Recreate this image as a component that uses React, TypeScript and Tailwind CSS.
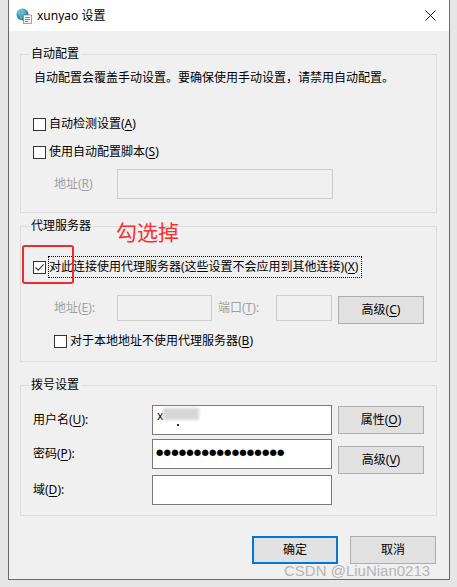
import React from "react";

const FONT = { fontFamily: '"Noto Sans", "Noto Sans CJK SC", sans-serif' };

function Key({ k }: { k: string }) {
  return <span className="underline underline-offset-2 decoration-1">{k}</span>;
}

function Box({ checked }: { checked?: boolean }) {
  return (
    <span className="w-[13px] h-[13px] border border-[#333333] bg-white flex items-center justify-center shrink-0">
      {checked && (
        <svg width="11" height="11" viewBox="0 0 11 11">
          <path d="M1.5 5.5 L4.2 8.2 L9.6 2.4" stroke="#3c3c3c" strokeWidth="1.1" fill="none" />
        </svg>
      )}
    </span>
  );
}

function Btn({ children, primary }: { children: React.ReactNode; primary?: boolean }) {
  return (
    <button
      className={
        "w-[86px] h-[28px] bg-[#e1e1e1] text-[12px] leading-[16px] text-black flex items-center justify-center " +
        (primary ? "border-2 border-[#0078d7]" : "border border-[#adadad]")
      }
    >
      {children}
    </button>
  );
}

function Group({ title, children, className }: { title: string; children: React.ReactNode; className?: string }) {
  return (
    <fieldset className={"w-[417px] border border-[#dcdcdc] " + (className ?? "")}>
      <legend className="ml-[8px] px-[2px] text-[12px] leading-[16px] text-black">{title}</legend>
      {children}
    </fieldset>
  );
}

function TitleIcon() {
  return (
    <svg width="16" height="16" viewBox="0 0 16 16">
      <defs>
        <radialGradient id="g" cx="0.35" cy="0.3" r="0.8">
          <stop offset="0" stopColor="#9fe0ff" />
          <stop offset="0.5" stopColor="#2f8fd8" />
          <stop offset="1" stopColor="#1a5fa8" />
        </radialGradient>
      </defs>
      <circle cx="6.5" cy="6.5" r="6" fill="url(#g)" />
      <path d="M3 3.5 C5 3 6 5 4.5 7 C3.5 8.5 5 10 6 11" stroke="#5cc15a" strokeWidth="2" fill="none" />
      <path d="M8 2 C9.5 3 10 4.5 9 6" stroke="#5cc15a" strokeWidth="1.6" fill="none" />
      <rect x="7.5" y="7" width="8" height="8.5" fill="#ffffff" stroke="#8a8a8a" strokeWidth="0.8" />
      <path d="M9 9.5 H14 M9 11.5 H14 M9 13.5 H12.5" stroke="#4a7fc0" strokeWidth="0.9" />
    </svg>
  );
}

export default function App() {
  return (
    <div className="relative w-[457px] h-[587px] bg-[#e6e6e6] overflow-hidden" style={FONT}>
      <div className="ml-[8px] w-[442px] h-[580px] border-x border-b border-[#6b6b6b] flex flex-col">
        {/* title bar */}
        <div className="h-[31px] bg-white flex items-center pl-[7px] pr-[10px] shrink-0">
          <TitleIcon />
          <span className="ml-[5px] text-[12px] leading-[16px] text-black">xunyao 设置</span>
          <svg className="ml-auto mr-[3px]" width="11" height="11" viewBox="0 0 11 11">
            <path d="M0.5 0.5 L10.5 10.5 M10.5 0.5 L0.5 10.5" stroke="#111" strokeWidth="1" />
          </svg>
        </div>

        {/* body */}
        <div className="flex-1 bg-[#f0f0f0] pl-[11px] pt-[15px] text-[12px] leading-[16px] text-black">
          <Group title="自动配置" className="pb-[13px]">
            <div className="pl-[13px]">
              <div className="mt-[8px]">自动配置会覆盖手动设置。要确保使用手动设置，请禁用自动配置。</div>
              <div className="mt-[30px] -ml-[1px] flex items-center gap-[3px]">
                <Box />
                <span>
                  自动检测设置(<Key k="A" />)
                </span>
              </div>
              <div className="mt-[12px] -ml-[1px] flex items-center gap-[3px]">
                <Box />
                <span>
                  使用自动配置脚本(<Key k="S" />)
                </span>
              </div>
              <div className="mt-[9px] ml-[20px] flex items-center">
                <span className="w-[63px] text-[#a0a0a0]">
                  地址(<Key k="R" />)
                </span>
                <div className="w-[216px] h-[30px] border border-[#cccccc] bg-[#f0f0f0]" />
              </div>
            </div>
          </Group>

          <Group title="代理服务器" className="mt-[5px] pb-[12px]">
            <div className="pl-[13px]">
              <div className="mt-[22px] -ml-[1px] flex items-center gap-[2px]">
                <Box checked />
                <span className="h-[22px] w-[314px] border border-dotted border-black flex items-center">
                  对此连接使用代理服务器(这些设置不会应用到其他连接)(<Key k="X" />)
                </span>
              </div>
              <div className="mt-[17px] ml-[20px] flex items-start">
                <span className="w-[63px] h-[26px] flex items-center text-[#a0a0a0]">
                  地址(<Key k="E" />):
                </span>
                <div className="w-[95px] h-[26px] border border-[#cccccc] bg-[#f0f0f0]" />
                <span className="ml-[6px] w-[58px] h-[26px] flex items-center text-[#a0a0a0]">
                  端口(<Key k="T" />):
                </span>
                <div className="w-[56px] h-[26px] border border-[#cccccc] bg-[#f0f0f0]" />
                <div className="ml-[6px] mt-[1px]">
                  <Btn>
                    高级(<Key k="C" />)
                  </Btn>
                </div>
              </div>
              <div className="mt-[9px] ml-[20px] flex items-center gap-[3px]">
                <Box />
                <span>
                  对于本地地址不使用代理服务器(<Key k="B" />)
                </span>
              </div>
            </div>
          </Group>

          <Group title="拨号设置" className="mt-[15px] pb-[10px]">
            <div className="pl-[12px] mt-[12px] flex">
              <div className="flex flex-col gap-[4px]">
                <div className="flex items-center">
                  <span className="w-[119px]">
                    用户名(<Key k="U" />):
                  </span>
                  <div className="relative w-[180px] h-[30px] border border-[#7a7a7a] bg-white flex items-center pl-[4px]">
                    <span className="-mt-[8px]">x</span>
                    <div className="absolute left-[10px] top-[2px] w-[36px] h-[12px] bg-[#d6d6d6] blur-[1.5px]" />
                    <div className="absolute left-[24px] top-[18px] w-[2px] h-[2px] bg-[#333]" />
                  </div>
                </div>
                <div className="flex items-center">
                  <span className="w-[119px]">
                    密码(<Key k="P" />):
                  </span>
                  <div className="w-[180px] h-[30px] border border-[#7a7a7a] bg-white flex items-center pl-[3px]">
                    <span
                      className="-mt-[5px] text-[8.5px] tracking-[0.15px] text-black"
                      style={{ fontFamily: '"DejaVu Sans", sans-serif' }}
                    >
                      ●●●●●●●●●●●●●●●●●
                    </span>
                  </div>
                </div>
                <div className="mt-[2px] flex items-center">
                  <span className="w-[119px]">
                    域(<Key k="D" />):
                  </span>
                  <div className="w-[180px] h-[30px] border border-[#7a7a7a] bg-white" />
                </div>
              </div>
              <div className="ml-[6px] mt-[1px] flex flex-col gap-[12px]">
                <Btn>
                  属性(<Key k="O" />)
                </Btn>
                <Btn>
                  高级(<Key k="V" />)
                </Btn>
              </div>
            </div>
          </Group>

          <div className="mt-[20px] w-[416px] flex justify-end gap-[12px]">
            <Btn primary>确定</Btn>
            <Btn>取消</Btn>
          </div>
        </div>
      </div>

      {/* annotation overlays */}
      <div className="absolute left-[116px] top-[218px] text-[21px] leading-[28px] text-[#f53030]">勾选掉</div>
      <div className="absolute left-[22px] top-[245px] w-[52px] h-[39px] border-2 border-[#ee2a2a] rounded-[3px]" />
      <div
        className="absolute left-[284px] top-[562px] text-[15px] leading-[18px] text-[#b4b4b4]"
        style={{ fontFamily: '"Liberation Sans", sans-serif' }}
      >
        CSDN @LiuNian0213
      </div>
    </div>
  );
}
